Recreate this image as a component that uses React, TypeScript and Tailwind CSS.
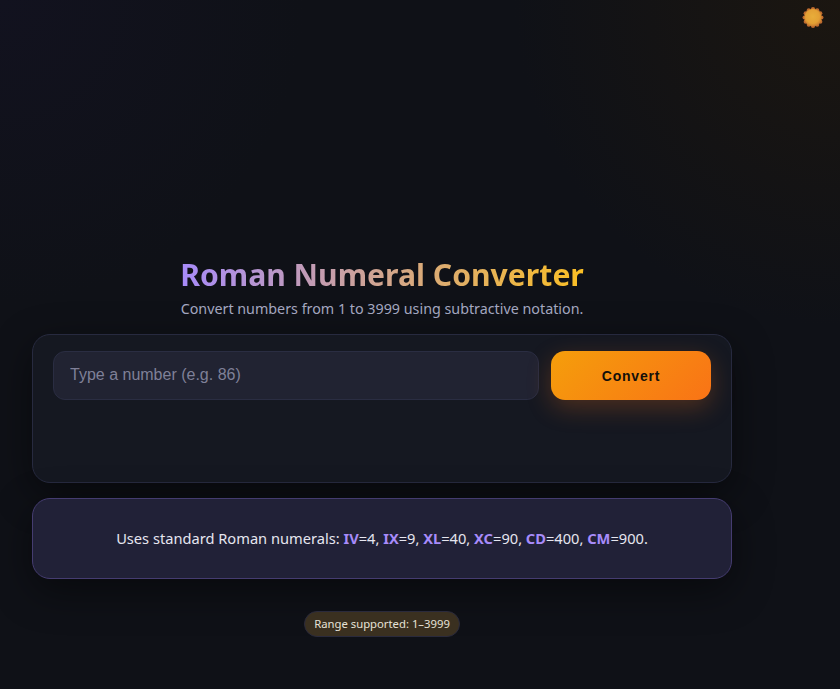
import { useState } from 'react'

const pairs = [
    ["IV", "4"],
    ["IX", "9"],
    ["XL", "40"],
    ["XC", "90"],
    ["CD", "400"],
    ["CM", "900"],
]

function Sun() {
    const bumps = Array.from({ length: 12 }, (_, i) => (i * Math.PI) / 6)
    return (
        <svg width="24" height="24" viewBox="0 0 24 24">
            <defs>
                <radialGradient id="sunFill" cx="48%" cy="45%" r="55%">
                    <stop offset="0%" stopColor="#e8ad3a" />
                    <stop offset="70%" stopColor="#e3a034" />
                    <stop offset="100%" stopColor="#c97c2e" />
                </radialGradient>
            </defs>
            {bumps.map((a) => (
                <circle key={a} cx={12 + 8.4 * Math.cos(a)} cy={11.5 + 8.4 * Math.sin(a)} r="2.1" fill="#bd6a2e" />
            ))}
            <circle cx="12" cy="11.5" r="8.8" fill="url(#sunFill)" />
        </svg>
    )
}

export default function App() {
    const [value, setValue] = useState("")

    return (
        <div className="relative min-h-screen overflow-hidden bg-[radial-gradient(circle_at_100%_0%,#1b1610_0%,rgba(27,22,16,0)_30%),radial-gradient(circle_at_0%_0%,#12121f_0%,rgba(18,18,31,0)_28%),linear-gradient(#0f1117,#0f1117)] pl-8 pt-[256px] font-['Noto_Sans','Open_Sans',sans-serif]">
            <button className="absolute right-[15px] top-[6px] block">
                <Sun />
            </button>

            <div className="flex w-[700px] flex-col items-center">
                <h1 className="bg-[linear-gradient(90deg,#a78bfa,#fbbf24)] bg-clip-text text-[30.15px] font-bold leading-[38px] text-transparent">
                    Roman Numeral Converter
                </h1>
                <p className="mt-[3px] text-[14.3px] leading-[24px] text-[#a6a9c2]">
                    Convert numbers from 1 to 3999 using subtractive notation.
                </p>

                <div className="mt-[13px] h-[149px] w-full rounded-[18px] border border-[#272a3f] bg-[#151821] px-5 pt-4 shadow-[0_12px_40px_rgba(0,0,0,0.45)]">
                    <div className="flex gap-3">
                        <input
                            value={value}
                            onChange={(e) => setValue(e.target.value)}
                            placeholder="Type a number (e.g. 86)"
                            className="h-[49px] min-w-0 flex-1 rounded-xl border border-[#2a2d42] bg-[#212332] px-4 pb-[2px] font-['Liberation_Sans',sans-serif] text-base text-white outline-none placeholder:text-[#7f8098]"
                        />
                        <button className="h-[49px] w-[160px] rounded-[14px] bg-[linear-gradient(135deg,#f59e0b,#f97316)] pt-[2px] font-['Liberation_Sans',sans-serif] text-[14px] font-bold tracking-[0.8px] text-[#14100a] shadow-[0_8px_24px_rgba(249,115,22,0.25)]">
                            Convert
                        </button>
                    </div>
                </div>

                <div className="mt-[15px] flex h-[81px] w-full items-center justify-center rounded-[18px] border border-[#453c70] bg-[#212137] text-[14.65px] text-[#e6e6f0] shadow-[0_12px_40px_rgba(0,0,0,0.45)]">
                    <p>
                        Uses standard Roman numerals:{" "}
                        {pairs.map(([r, n], i) => (
                            <span key={r}>
                                <b className="font-bold text-[#a78bfa]">{r}</b>={n}
                                {i < pairs.length - 1 ? ", " : "."}
                            </span>
                        ))}
                    </p>
                </div>

                <div className="mt-8 flex h-[26px] w-[156px] items-center justify-center rounded-full border border-[#2a2a3c] bg-[#3a3020] text-[11.3px] text-[#e6e2d6]">
                    Range supported: 1–3999
                </div>
            </div>
        </div>
    )
}
